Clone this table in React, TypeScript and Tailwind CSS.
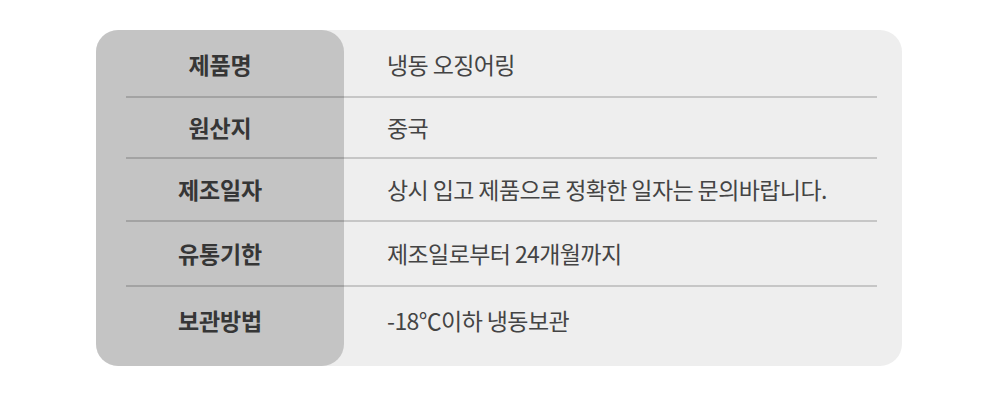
import React from "react";

const rows = [
  { label: "제품명", value: "냉동 오징어링", row: "row-start-1", pad: "pt-[3px]" },
  { label: "원산지", value: "중국", row: "row-start-3", pad: "" },
  { label: "제조일자", value: "상시 입고 제품으로 정확한 일자는 문의바랍니다.", row: "row-start-5", pad: "" },
  { label: "유통기한", value: "제조일로부터 24개월까지", row: "row-start-7", pad: "" },
  { label: "보관방법", value: "-18℃이하 냉동보관", row: "row-start-9", pad: "pb-[12px]" },
];

const lines = ["row-start-2", "row-start-4", "row-start-6", "row-start-8"];

export default function App() {
  return (
    <div
      className="w-[1000px] h-[403px] bg-white pt-[30px] pl-[96px]"
      style={{ fontFamily: '"Noto Sans CJK KR", "Noto Sans", sans-serif' }}
    >
      <div className="w-[806px] h-[336px] rounded-[22px] bg-[#eeeeee] grid grid-cols-[30px_218px_43px_1fr_25px] grid-rows-[66px_2px_59px_2px_61px_2px_63px_2px_79px]">
        <div className="col-start-1 col-end-3 row-start-1 row-end-10 bg-[#c4c4c4] rounded-[22px]" />
        {lines.map((r) => (
          <div key={r} className={`${r} col-start-2 col-end-5 bg-black/[0.17]`} />
        ))}
        {rows.map((r) => (
          <React.Fragment key={r.label}>
            <div
              className={`${r.row} ${r.pad} col-start-1 col-end-3 flex items-center justify-center text-[23px] font-bold text-[#363636] tracking-[-0.2px]`}
            >
              {r.label}
            </div>
            <div
              className={`${r.row} ${r.pad} col-start-4 col-end-5 flex items-center text-[23px] text-[#444444] tracking-[-0.6px] whitespace-nowrap`}
            >
              {r.value}
            </div>
          </React.Fragment>
        ))}
      </div>
    </div>
  );
}
